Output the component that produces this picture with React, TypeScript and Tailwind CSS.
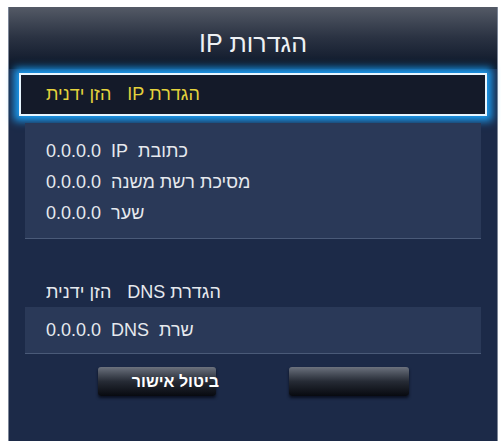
import React from "react"

const font = { fontFamily: '"Liberation Sans", "DejaVu Sans", Arial, sans-serif' }

// words laid out right-to-left, like the TV menu does
function Words({ words, className }: { words: string[]; className: string }) {
  return (
    <div dir="rtl" className={`flex ${className}`}>
      {words.map((w, i) => (
        <span key={i}>{w}</span>
      ))}
    </div>
  )
}

function InfoRow({ words }: { words: string[] }) {
  return (
    <div className="flex h-[31px] items-center pl-[21px]">
      <Words words={words} className="gap-[10px] text-[18px] text-[#e6e9ee]" />
    </div>
  )
}

export default function App() {
  return (
    <div className="h-[443px] w-[501px] overflow-hidden bg-white pl-[8px] pt-[7px]" style={font}>
      <div className="flex h-[434px] w-[490px] flex-col border-x border-[#7d8798] bg-[#1c2a48]">
        {/* header */}
        <div className="flex h-[62px] shrink-0 items-start justify-center bg-gradient-to-b from-[#545a66] via-[#2a3242] to-[#0c1628] pt-[20px]">
          <span dir="rtl" className="text-[25px] leading-[32px] text-[#eef1f4]">
            הגדרות IP
          </span>
        </div>

        {/* focused row */}
        <div className="mx-[10px] mt-[4px] flex h-[43px] shrink-0 items-center border-2 border-[#e8f6ff] bg-[#141a29] pl-[25px] shadow-[0_0_8px_5px_#1b9cf0]">
          <Words words={["הגדרת IP", "הזן ידנית"]} className="gap-[16px] text-[18px] text-[#e4d23c]" />
        </div>

        {/* ip info */}
        <div className="mx-[16px] mt-[7px] h-[115px] shrink-0 bg-[#2a3958] pt-[13px] shadow-[0_1px_0_#4a5a78]">
          <InfoRow words={["כתובת", "IP", "0.0.0.0"]} />
          <InfoRow words={["מסיכת רשת משנה", "0.0.0.0"]} />
          <InfoRow words={["שער", "0.0.0.0"]} />
        </div>

        {/* dns */}
        <div className="mt-[39px] flex h-[30px] shrink-0 items-center pl-[37px]">
          <Words words={["הגדרת DNS", "הזן ידנית"]} className="gap-[16px] text-[18px] text-[#e6e9ee]" />
        </div>
        <div className="mx-[16px] flex h-[46px] shrink-0 items-center bg-[#2a3958] pl-[21px] shadow-[0_1px_0_#4a5a78]">
          <Words words={["שרת", "DNS", "0.0.0.0"]} className="gap-[10px] text-[18px] text-[#e6e9ee]" />
        </div>

        {/* buttons */}
        <div className="mt-[14px] flex shrink-0 gap-[73px] pl-[89px]">
          <div className="flex h-[29px] w-[118px] items-center justify-end rounded-[3px] bg-gradient-to-b from-[#6c727e] via-[#262b35] to-[#080a10] shadow-[0_2px_3px_#0a1020]">
            <span dir="rtl" className="mr-[-3px] text-[16px] font-bold text-white">
              ביטול אישור
            </span>
          </div>
          <div className="h-[29px] w-[120px] rounded-[3px] bg-gradient-to-b from-[#6c727e] via-[#262b35] to-[#080a10] shadow-[0_2px_3px_#0a1020]" />
        </div>
      </div>
    </div>
  )
}
